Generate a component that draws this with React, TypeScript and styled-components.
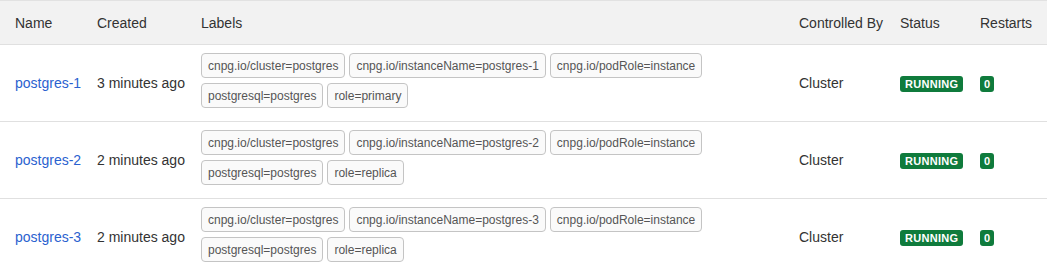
import React from "react";
import styled, { createGlobalStyle } from "styled-components";

const Global = createGlobalStyle`
  html, body { margin: 0; padding: 0; background: #fff; }
  body { font-family: "Liberation Sans", Arial, sans-serif; color: #333; }
`;

const COLS = "82px 104px 598px 101px 80px 82px";

const Table = styled.div`
  width: 1047px;
  border-top: 1px solid #e2e2e2;
`;

const HeaderRow = styled.div`
  display: grid;
  grid-template-columns: ${COLS};
  height: 43px;
  align-items: center;
  background: #f2f2f2;
  border-bottom: 1px solid #e0e0e0;
`;

const HeadCell = styled.div`
  padding-left: 15px;
  font-size: 14px;
  color: #333;
  white-space: nowrap;
`;

const Row = styled.div`
  display: grid;
  grid-template-columns: ${COLS};
  align-items: center;
  padding: 8px 0;
  border-bottom: 1px solid #e0e0e0;
`;

const Cell = styled.div`
  padding-left: 15px;
  font-size: 14px;
  color: #333;
  white-space: nowrap;
`;

const NameLink = styled.a`
  color: #2a62cf;
  text-decoration: none;
  font-size: 14px;
`;

const Labels = styled.div`
  display: flex;
  flex-wrap: wrap;
  gap: 5px 4px;
  padding: 0 10px 5px 0;
`;

const Chip = styled.span`
  display: inline-flex;
  align-items: center;
  height: 25px;
  box-sizing: border-box;
  padding: 0 6px;
  border: 1px solid #c4c4c4;
  border-radius: 4px;
  background: #fafafa;
  font-size: 12px;
  color: #555;
  white-space: nowrap;
`;

const Badge = styled.span`
  display: inline-block;
  background: #0f7b3c;
  color: #fff;
  font-weight: 700;
  font-size: 11px;
  line-height: 16px;
  padding: 0 ${(p: { $pad: number }) => p.$pad}px;
  border-radius: 3px;
  letter-spacing: 0.3px;
`;

const pods = [
  { name: "postgres-1", created: "3 minutes ago", role: "primary" },
  { name: "postgres-2", created: "2 minutes ago", role: "replica" },
  { name: "postgres-3", created: "2 minutes ago", role: "replica" },
];

export default function App() {
  return (
    <>
      <Global />
      <Table>
        <HeaderRow>
          <HeadCell>Name</HeadCell>
          <HeadCell>Created</HeadCell>
          <HeadCell>Labels</HeadCell>
          <HeadCell>Controlled By</HeadCell>
          <HeadCell>Status</HeadCell>
          <HeadCell>Restarts</HeadCell>
        </HeaderRow>
        {pods.map((p) => (
          <Row key={p.name}>
            <Cell>
              <NameLink href="#">{p.name}</NameLink>
            </Cell>
            <Cell>{p.created}</Cell>
            <Cell>
              <Labels>
                <Chip>cnpg.io/cluster=postgres</Chip>
                <Chip>cnpg.io/instanceName={p.name}</Chip>
                <Chip>cnpg.io/podRole=instance</Chip>
                <Chip>postgresql=postgres</Chip>
                <Chip>role={p.role}</Chip>
              </Labels>
            </Cell>
            <Cell>Cluster</Cell>
            <Cell>
              <Badge $pad={5}>RUNNING</Badge>
            </Cell>
            <Cell>
              <Badge $pad={4}>0</Badge>
            </Cell>
          </Row>
        ))}
      </Table>
    </>
  );
}
